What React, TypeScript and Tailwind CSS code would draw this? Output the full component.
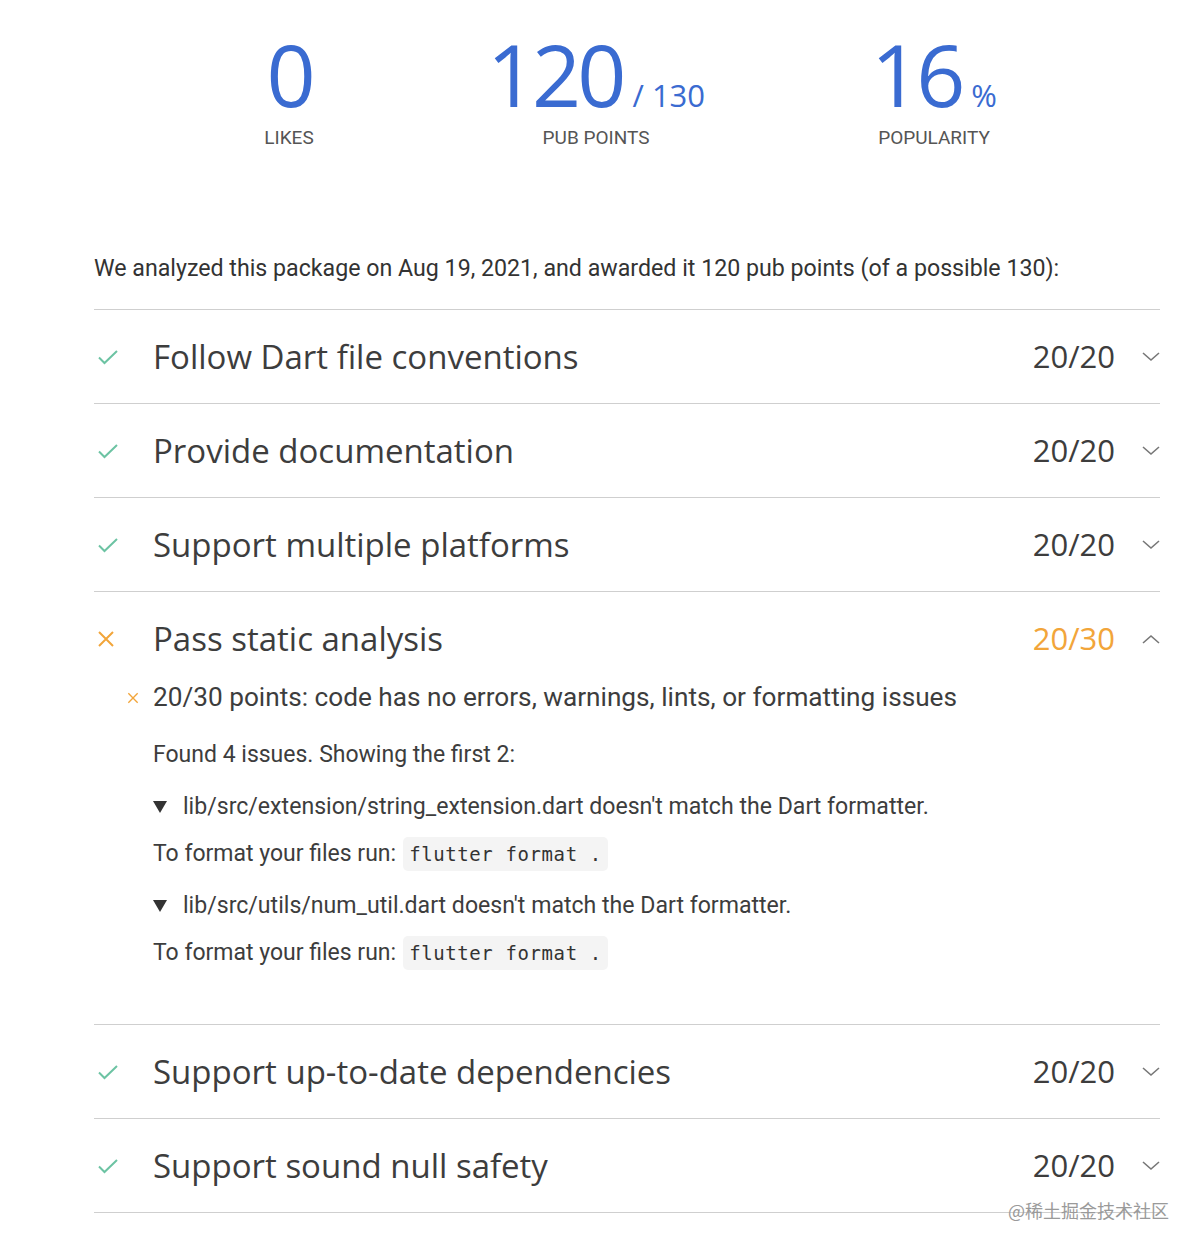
import React from 'react';

const sans = "font-['Roboto','Liberation_Sans',sans-serif]";
const head = "font-['Open_Sans','Roboto',sans-serif]";

const Check = () => (
  <svg width="22" height="16" viewBox="0 0 22 16" fill="none">
    <path d="M2 8.5 L7.5 14 L20 2" stroke="#6cc3a3" strokeWidth="2" />
  </svg>
);

const Cross = ({ size = 18 }: { size?: number }) => (
  <svg width={size} height={size} viewBox="0 0 18 18" fill="none">
    <path d="M2 2 L16 16 M16 2 L2 16" stroke="#f2a53a" strokeWidth="2" />
  </svg>
);

const Chevron = ({ up }: { up?: boolean }) => (
  <svg width="18" height="10" viewBox="0 0 18 10" fill="none">
    <path d={up ? 'M1 9 L9 2 L17 9' : 'M1 1 L9 8 L17 1'} stroke="#777" strokeWidth="1.6" />
  </svg>
);

const Triangle = () => (
  <svg width="14" height="12" viewBox="0 0 14 12">
    <path d="M0 0 H14 L7 12 Z" fill="#333" />
  </svg>
);

interface RowProps {
  title: string;
  score: string;
  failed?: boolean;
  children?: React.ReactNode;
}

const Row: React.FC<RowProps> = ({ title, score, failed, children }) => (
  <div className="border-t border-[#cfcfcf]">
    <div className="flex items-center h-[93px]">
      <div className="w-[59px] flex items-center pl-[3px]">{failed ? <Cross /> : <Check />}</div>
      <div className={`flex-1 text-[33px] text-[#3d3d3d] ${head}`}>{title}</div>
      <div className={`text-[31px] ${failed ? 'text-[#f2a53a]' : 'text-[#3d3d3d]'} ${head}`}>{score}</div>
      <div className="w-[45px] flex justify-end">
        <Chevron up={failed} />
      </div>
    </div>
    {children}
  </div>
);

const Code = () => (
  <span className="ml-[7px] inline-block bg-[#f4f4f4] rounded-[5px] px-[6px] py-[3px] font-['DejaVu_Sans_Mono',monospace] text-[19px] text-[#333] tracking-[0.6px]">
    flutter format .
  </span>
);

const Issue = ({ file }: { file: string }) => (
  <>
    <div className="flex items-center h-[40px] mt-[12px]">
      <span className="w-[30px] flex items-center">
        <Triangle />
      </span>
      <span className="text-[23.1px] text-[#3d3d3d]">{file} doesn't match the Dart formatter.</span>
    </div>
    <div className="flex items-center h-[40px] mt-[7px] text-[23px] text-[#3d3d3d]">
      To format your files run:
      <Code />
    </div>
  </>
);

const Stat = ({ value, suffix, label, className }: { value: string; suffix?: string; label: string; className: string }) => (
  <div className={`flex flex-col items-center w-[200px] ${className}`}>
    <div className={`flex shrink-0 items-baseline whitespace-nowrap text-[#3a6bd1] ${head}`}>
      <span className="text-[86px] leading-[100px] tracking-[-4px]">{value}</span>
      {suffix && <span className="text-[31px] ml-[10px]">{suffix}</span>}
    </div>
    <div className="text-[19px] leading-[28px] text-[#555] whitespace-nowrap">{label}</div>
  </div>
);

export default function App() {
  return (
    <div className={`relative w-[1200px] h-[1251px] bg-white overflow-hidden ${sans}`}>
      <div className="flex items-start pl-[189px] pt-[24px]">
        <Stat value="0" label="LIKES" className="" />
        <Stat value="120" suffix="/ 130" label="PUB POINTS" className="ml-[107px]" />
        <Stat value="16" suffix="%" label="POPULARITY" className="ml-[138px]" />
      </div>

      <div className="ml-[94px] w-[1066px]">
        <p className="mt-[96px] mb-[21px] h-[40px] flex items-center text-[23.2px] text-[#333] whitespace-nowrap">
          We analyzed this package on Aug 19, 2021, and awarded it 120 pub points (of a possible 130):
        </p>
        <Row title="Follow Dart file conventions" score="20/20" />
        <Row title="Provide documentation" score="20/20" />
        <Row title="Support multiple platforms" score="20/20" />
        <Row title="Pass static analysis" score="20/30" failed>
          <div className="pl-[33px] pb-[51px] -mt-[7px]">
            <div className="flex items-center h-[40px]">
              <span className="w-[26px] flex items-center">
                <Cross size={12} />
              </span>
              <span className="text-[26.2px] text-[#3d3d3d]">
                20/30 points: code has no errors, warnings, lints, or formatting issues
              </span>
            </div>
            <div className="pl-[26px]">
              <div className="flex items-center h-[40px] mt-[17px] text-[23px] text-[#3d3d3d]">
                Found 4 issues. Showing the first 2:
              </div>
              <Issue file="lib/src/extension/string_extension.dart" />
              <Issue file="lib/src/utils/num_util.dart" />
            </div>
          </div>
        </Row>
        <Row title="Support up-to-date dependencies" score="20/20" />
        <Row title="Support sound null safety" score="20/20" />
        <div className="border-t border-[#cfcfcf]" />
      </div>

      <div className="absolute left-[1008px] top-[1197px] text-[18px] text-[#9a9a9a] font-['Noto_Sans_CJK_SC',sans-serif]">
        @稀土掘金技术社区
      </div>
    </div>
  );
}
